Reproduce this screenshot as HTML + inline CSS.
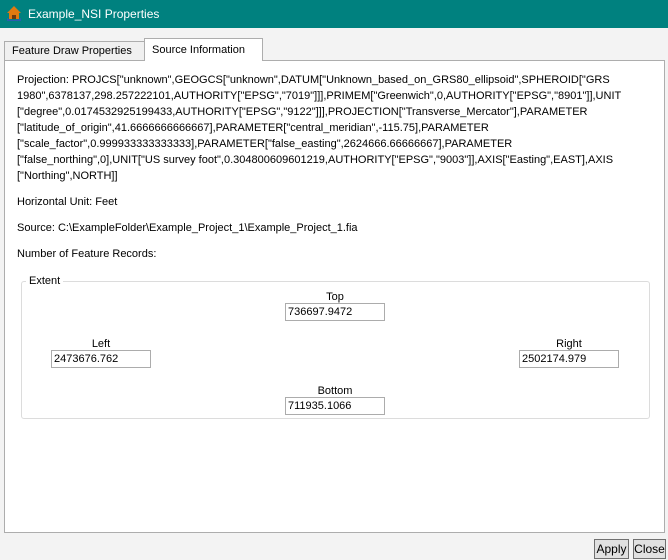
<!DOCTYPE html>
<html><head><meta charset="utf-8"><style>
*{margin:0;padding:0;box-sizing:border-box}
body{width:668px;height:560px;background:#f3f3f3;font-family:"Liberation Sans",sans-serif;font-size:11px;color:#000;position:relative;overflow:hidden}
.title{position:absolute;left:0;top:0;width:668px;height:28px;background:#00817f;color:#fff;font-size:12px;line-height:28px;padding-left:28px}
.abs{position:absolute}
.tab{position:absolute;border:1px solid #adadad;border-bottom:none;white-space:nowrap;line-height:18px;padding-left:7px}
.panel{position:absolute;left:4px;top:60px;width:661px;height:473px;background:#fff;border:1px solid #adadad}
.txt{position:absolute;left:17px;line-height:16px;white-space:nowrap}
.box{position:absolute;width:100px;height:18px;border:1px solid #acacac;background:#fff;line-height:16px;padding-left:2px}
.lbl{position:absolute;width:100px;text-align:center;line-height:14px}
.btn{position:absolute;top:539px;height:20px;border:1px solid #707070;background:#e1e1e1;text-align:center;line-height:18px;font-size:12px}
</style></head><body>
<div class="title">Example_NSI Properties</div>
<svg class="abs" style="left:6px;top:5px" width="16" height="16" viewBox="0 0 16 16"><path d="M1 8 L8 1 L15 8 L13 8 L13 14 L3 14 L3 8Z" fill="#e07a10"/><path d="M6 14 V10 H10 V14" fill="#6b3a10"/><path d="M1 13 Q8 17 15 13 L15 16 L1 16Z" fill="#2a5db0"/></svg>
<div class="tab" style="left:4px;top:41px;width:141px;height:20px;background:#f0f0f0">Feature Draw Properties</div>
<div class="panel"></div>
<div class="tab" style="left:144px;top:38px;width:119px;height:23px;background:#fff;line-height:22px">Source Information</div>
<div class="txt" style="top:72px">Projection: PROJCS["unknown",GEOGCS["unknown",DATUM["Unknown_based_on_GRS80_ellipsoid",SPHEROID["GRS</div>
<div class="txt" style="top:88px">1980",6378137,298.257222101,AUTHORITY["EPSG","7019"]]],PRIMEM["Greenwich",0,AUTHORITY["EPSG","8901"]],UNIT</div>
<div class="txt" style="top:104px">["degree",0.0174532925199433,AUTHORITY["EPSG","9122"]]],PROJECTION["Transverse_Mercator"],PARAMETER</div>
<div class="txt" style="top:120px">["latitude_of_origin",41.6666666666667],PARAMETER["central_meridian",-115.75],PARAMETER</div>
<div class="txt" style="top:136px">["scale_factor",0.999933333333333],PARAMETER["false_easting",2624666.66666667],PARAMETER</div>
<div class="txt" style="top:152px">["false_northing",0],UNIT["US survey foot",0.304800609601219,AUTHORITY["EPSG","9003"]],AXIS["Easting",EAST],AXIS</div>
<div class="txt" style="top:168px">["Northing",NORTH]]</div>
<div class="txt" style="top:194px">Horizontal Unit: Feet</div>
<div class="txt" style="top:220px">Source: C:\ExampleFolder\Example_Project_1\Example_Project_1.fia</div>
<div class="txt" style="top:246px">Number of Feature Records:</div>
<div class="abs" style="left:21px;top:281px;width:629px;height:138px;border:1px solid #dcdcdc;border-radius:3px"></div>
<div class="abs" style="left:26px;top:274px;background:#fff;padding:0 3px;line-height:14px">Extent</div>
<div class="lbl" style="left:285px;top:290px">Top</div>
<div class="box" style="left:285px;top:303px">736697.9472</div>
<div class="lbl" style="left:51px;top:337px">Left</div>
<div class="box" style="left:51px;top:350px">2473676.762</div>
<div class="lbl" style="left:519px;top:337px">Right</div>
<div class="box" style="left:519px;top:350px">2502174.979</div>
<div class="lbl" style="left:285px;top:384px">Bottom</div>
<div class="box" style="left:285px;top:397px">711935.1066</div>
<div class="btn" style="left:594px;width:35px">Apply</div>
<div class="btn" style="left:633px;width:33px">Close</div>
</body></html>
